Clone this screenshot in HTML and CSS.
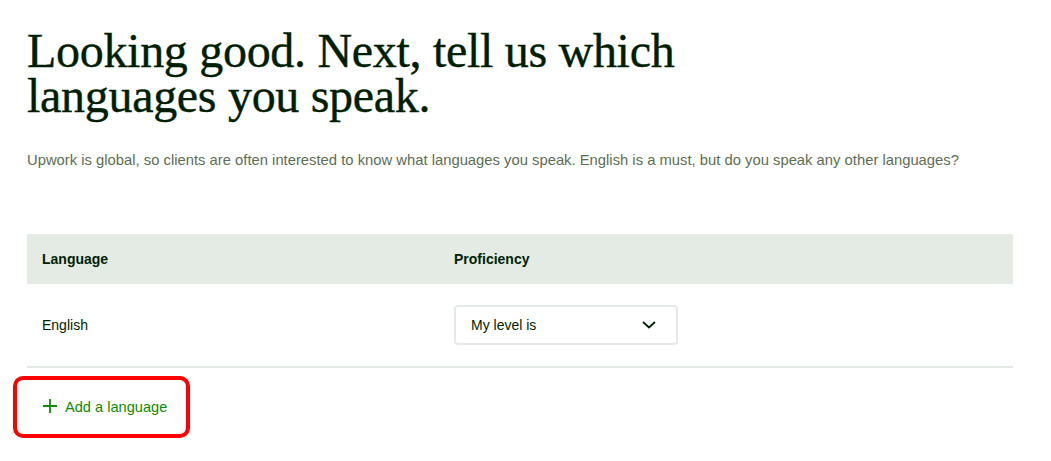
FILE: index.html
```html
<!DOCTYPE html>
<html>
<head>
<meta charset="utf-8">
<link rel="stylesheet" href="styles.css">
</head>
<body>
<main class="page">
  <h1 class="title">Looking good. Next, tell us which<br>languages you speak.</h1>
  <p class="lead">Upwork is global, so clients are often interested to know what languages you speak. English is a must, but do you speak any other languages?</p>
  <div class="table">
    <div class="thead">
      <div class="col-lang">Language</div>
      <div class="col-prof">Proficiency</div>
    </div>
    <div class="row">
      <div class="col-lang">English</div>
      <div class="col-prof">
        <div class="select">
          <span>My level is</span>
          <svg class="chev" width="14" height="8" viewBox="0 0 14 8"><path d="M1 1l6 5.5L13 1" fill="none" stroke="#001e00" stroke-width="1.8"/></svg>
        </div>
      </div>
    </div>
  </div>
  <div class="add-wrap">
    <button class="add">
      <svg width="14" height="14" viewBox="0 0 14 14"><path d="M7 0v14M0 7h14" stroke="#108a00" stroke-width="1.8"/></svg>
      <span>Add a language</span>
    </button>
  </div>
</main>
</body>
</html>
```
FILE: styles.css
```css
html, body {
  margin: 0;
  padding: 0;
  background: #fff;
}
body {
  font-family: "Liberation Sans", Arial, sans-serif;
  color: #001e00;
}
.page {
  padding: 28px 38px 0 27px;
}
.title {
  margin: 0;
  font-family: "Liberation Serif", "Times New Roman", serif;
  font-weight: 400;
  font-size: 48px;
  line-height: 45px;
  letter-spacing: -0.3px;
  color: #001e00;
  -webkit-text-stroke: 0.4px #001e00;
}
.lead {
  margin: 32px 0 0;
  font-size: 14.8px;
  line-height: 20px;
  color: #5e6d55;
}
.table {
  margin-top: 64px;
}
.thead {
  display: flex;
  align-items: center;
  height: 50px;
  background: #e4ebe4;
  font-size: 14px;
  font-weight: 700;
}
.row {
  display: flex;
  align-items: center;
  height: 82px;
  border-bottom: 2px solid #e4ebe4;
  font-size: 14px;
  color: #001e00;
}
.col-lang {
  width: 412px;
  padding-left: 15px;
}
.col-prof {
  flex: 1;
}
.select {
  width: 224px;
  height: 40px;
  box-sizing: border-box;
  border: 2px solid #e4ebe4;
  border-radius: 4px;
  display: flex;
  align-items: center;
  justify-content: space-between;
  padding: 0 20px 0 15px;
  color: #001e00;
}
.add-wrap {
  margin: 8px 0 0 -14px;
}
.add {
  display: inline-flex;
  align-items: center;
  gap: 8px;
  width: 177px;
  height: 62px;
  box-sizing: border-box;
  padding: 0 0 0 26px;
  border: 4px solid #ff0000;
  border-radius: 10px;
  background: #fff;
  font-family: "Liberation Sans", Arial, sans-serif;
  font-size: 14.6px;
  color: #108a00;
  cursor: pointer;
}
.add svg { margin-top: -2px; }
```
